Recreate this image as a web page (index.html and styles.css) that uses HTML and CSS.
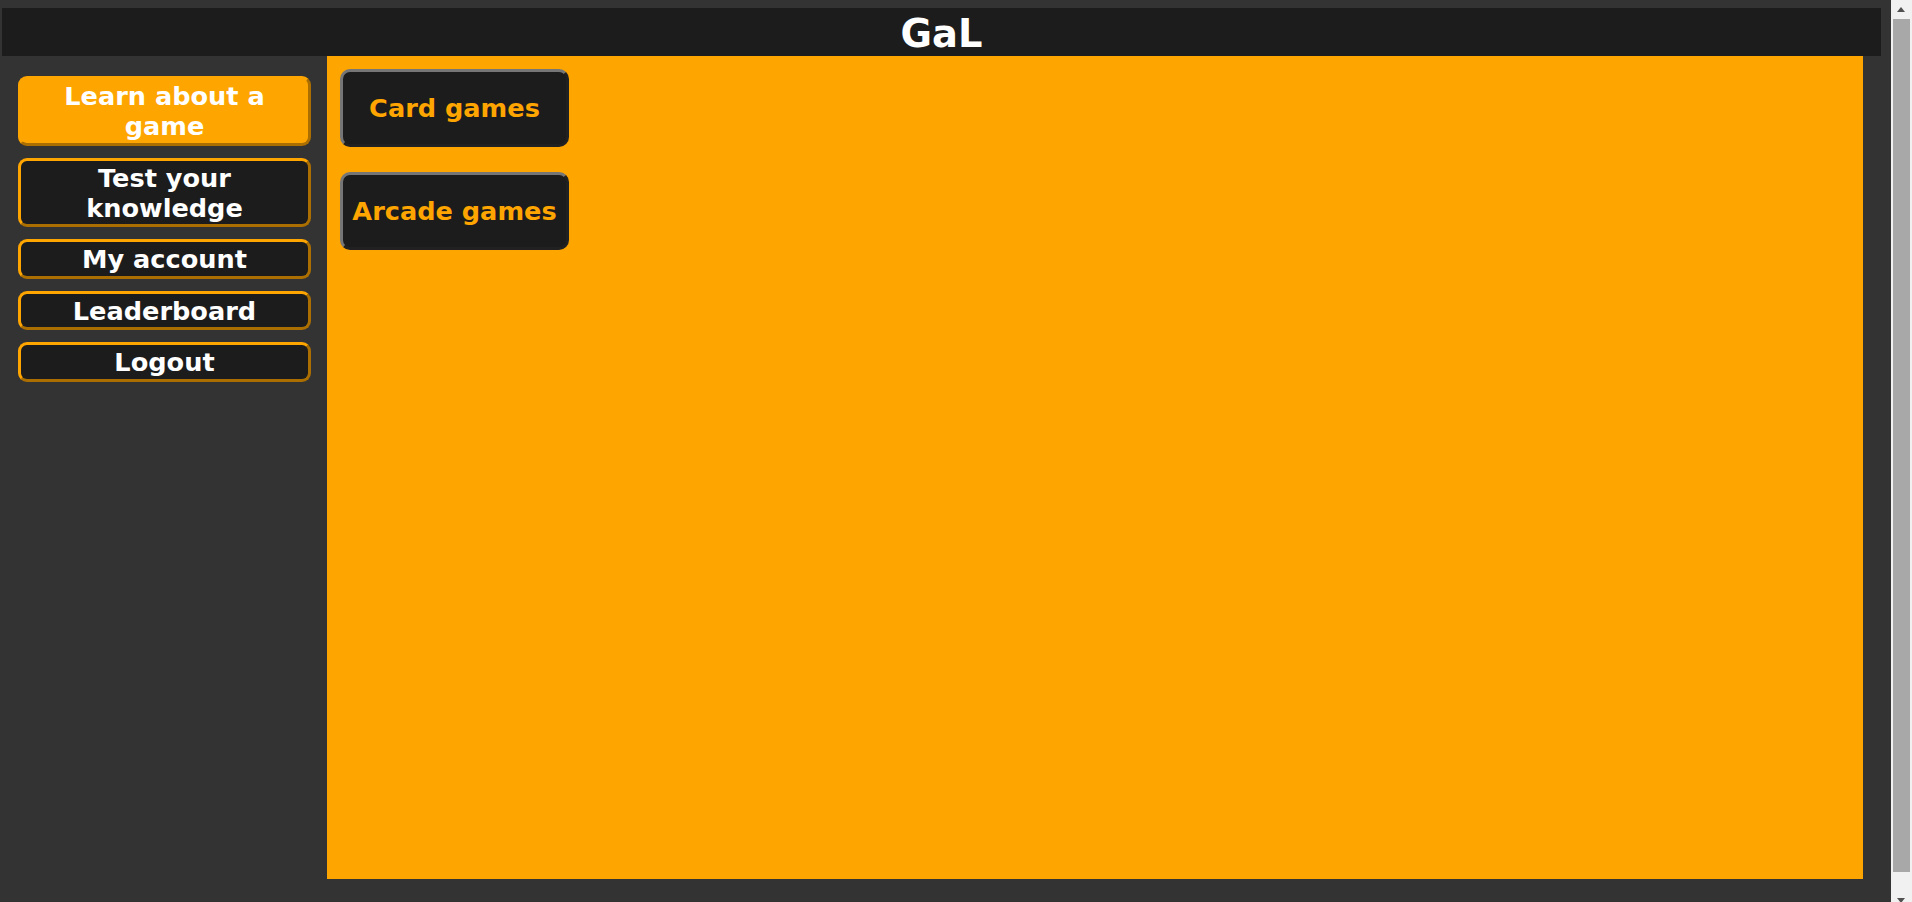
FILE: index.html
```html
<!DOCTYPE html>
<html>
<head>
<meta charset="utf-8">
<title>GaL</title>
<link rel="stylesheet" href="styles.css">
</head>
<body>
<div class="page">
  <header class="topbar">GaL</header>
  <div class="layout">
    <nav class="sidebar">
      <button class="nav-btn active">Learn about a game</button>
      <button class="nav-btn">Test your knowledge</button>
      <button class="nav-btn">My account</button>
      <button class="nav-btn">Leaderboard</button>
      <button class="nav-btn">Logout</button>
    </nav>
    <main class="main">
      <button class="cat-btn">Card games</button>
      <button class="cat-btn">Arcade games</button>
    </main>
  </div>
</div>
<div class="scrollbar">
  <span class="arrow arrow-up"></span>
  <span class="thumb"></span>
  <span class="arrow arrow-down"></span>
</div>
</body>
</html>
```

FILE: styles.css
```css
html {
  scrollbar-width: none;
}

html, body {
  margin: 0;
  padding: 0;
  background: #333333;
  font-family: "DejaVu Sans", Verdana, sans-serif;
}

.page {
  padding: 8px 0 39px 2px;
}

.topbar {
  width: 1879px;
  height: 48px;
  box-sizing: border-box;
  padding-top: 4px;
  line-height: 44px;
  background: #1c1c1c;
  color: #ffffff;
  font-weight: bold;
  font-size: 38.4px;
  text-align: center;
  overflow: hidden;
}

.layout {
  display: flex;
}

.sidebar {
  width: 325px;
  box-sizing: border-box;
  padding: 20px 16px 0 16px;
  display: flex;
  flex-direction: column;
  gap: 12px;
}

.nav-btn {
  display: block;
  box-sizing: border-box;
  width: 293px;
  padding: 2px 6px 1.5px;
  font-family: "DejaVu Sans", Verdana, sans-serif;
  font-size: 25.6px;
  font-weight: bold;
  color: #ffffff;
  background: #1c1c1c;
  border: 3px outset #ffa500;
  border-radius: 9px;
  text-align: center;
}

.nav-btn.active {
  background: #ffa500;
}

.main {
  width: 1536px;
  height: 823px;
  box-sizing: border-box;
  background: #ffa500;
  padding: 13px;
  display: flex;
  flex-direction: column;
  align-items: flex-start;
  gap: 25px;
}

.cat-btn {
  box-sizing: border-box;
  width: 229px;
  height: 78px;
  padding: 0;
  font-family: "DejaVu Sans", Verdana, sans-serif;
  font-size: 25.6px;
  font-weight: bold;
  color: #ffa500;
  background: #1c1c1c;
  border: 3px outset #767676;
  border-radius: 10px;
  text-align: center;
}

.scrollbar {
  position: fixed;
  top: 0;
  right: 0;
  width: 21px;
  height: 100%;
  background: #f1f1f1;
}

.thumb {
  position: absolute;
  left: 2px;
  right: 2px;
  top: 19px;
  bottom: 30px;
  background: #a8a8a8;
}

.arrow {
  position: absolute;
  left: 6px;
  width: 0;
  height: 0;
  border-left: 4.5px solid transparent;
  border-right: 4.5px solid transparent;
}

.arrow-up {
  top: 7px;
  border-bottom: 5px solid #505050;
}

.arrow-down {
  bottom: -1px;
  border-top: 5px solid #505050;
}
```
